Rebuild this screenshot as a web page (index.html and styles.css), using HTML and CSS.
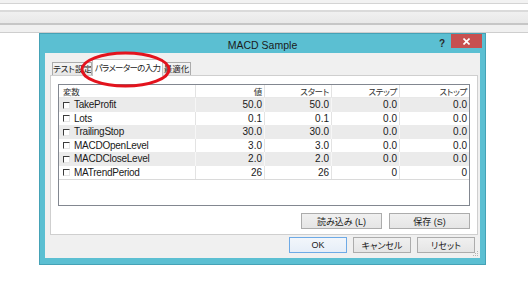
FILE: index.html
```html
<!DOCTYPE html>
<html lang="ja">
<head>
    <meta charset="UTF-8">
    <meta name="viewport" content="width=device-width, initial-scale=1.0">
    <title>MACD Sample</title>
    <link rel="stylesheet" href="styles.css">
</head>
<body>
    <!-- Barres de l'application derrière la fenêtre -->
    <div class="strips">
        <div class="strip strip-a"></div>
        <div class="strip strip-b"></div>
        <div class="strip strip-c"></div>
        <div class="strip strip-d"></div>
    </div>

    <div class="dialog">
        <div class="titlebar">
            <span></span>
            <span class="title">MACD Sample</span>
            <div class="controls">
                <span class="help">?</span>
                <span class="close">
                    <svg width="7" height="7" viewBox="0 0 7 7"><path d="M0.5 0.5L6.5 6.5M6.5 0.5L0.5 6.5" stroke="#fff" stroke-width="1.6"/></svg>
                </span>
            </div>
        </div>

        <div class="body">
            <div class="tabs">
                <div class="tab tab-test">テスト設定</div>
                <div class="tab tab-params active">パラメーターの入力</div>
                <div class="tab tab-optim">最適化</div>
                <svg class="mark" width="93" height="37" viewBox="0 0 93 37">
                    <ellipse cx="46.5" cy="18.5" rx="43.5" ry="16.5" fill="none" stroke="#e3131d" stroke-width="3"/>
                </svg>
            </div>

            <div class="panel">
                <div class="list">
                    <div class="row head">
                        <div class="cell name-head">変数</div>
                        <div class="cell num">値</div>
                        <div class="cell num">スタート</div>
                        <div class="cell num">ステップ</div>
                        <div class="cell num">ストップ</div>
                    </div>
                    <div class="row alt">
                        <div class="cell name"><span class="check"></span>TakeProfit</div>
                        <div class="cell num">50.0</div>
                        <div class="cell num">50.0</div>
                        <div class="cell num">0.0</div>
                        <div class="cell num">0.0</div>
                    </div>
                    <div class="row">
                        <div class="cell name"><span class="check"></span>Lots</div>
                        <div class="cell num">0.1</div>
                        <div class="cell num">0.1</div>
                        <div class="cell num">0.0</div>
                        <div class="cell num">0.0</div>
                    </div>
                    <div class="row alt">
                        <div class="cell name"><span class="check"></span>TrailingStop</div>
                        <div class="cell num">30.0</div>
                        <div class="cell num">30.0</div>
                        <div class="cell num">0.0</div>
                        <div class="cell num">0.0</div>
                    </div>
                    <div class="row">
                        <div class="cell name"><span class="check"></span>MACDOpenLevel</div>
                        <div class="cell num">3.0</div>
                        <div class="cell num">3.0</div>
                        <div class="cell num">0.0</div>
                        <div class="cell num">0.0</div>
                    </div>
                    <div class="row alt">
                        <div class="cell name"><span class="check"></span>MACDCloseLevel</div>
                        <div class="cell num">2.0</div>
                        <div class="cell num">2.0</div>
                        <div class="cell num">0.0</div>
                        <div class="cell num">0.0</div>
                    </div>
                    <div class="row last">
                        <div class="cell name"><span class="check"></span>MATrendPeriod</div>
                        <div class="cell num">26</div>
                        <div class="cell num">26</div>
                        <div class="cell num">0</div>
                        <div class="cell num">0</div>
                    </div>
                </div>

                <div class="actions">
                    <button class="btn btn-wide">読み込み (L)</button>
                    <button class="btn btn-wide">保存 (S)</button>
                </div>
            </div>

            <div class="footer">
                <button class="btn default">OK</button>
                <button class="btn">キャンセル</button>
                <button class="btn">リセット</button>
            </div>

            <svg class="grip" width="6" height="6" viewBox="0 0 6 6">
                <rect x="4" y="0" width="1" height="1" fill="#b5b5b5"/>
                <rect x="2" y="2" width="1" height="1" fill="#b5b5b5"/>
                <rect x="4" y="2" width="1" height="1" fill="#b5b5b5"/>
                <rect x="0" y="4" width="1" height="1" fill="#b5b5b5"/>
                <rect x="2" y="4" width="1" height="1" fill="#b5b5b5"/>
                <rect x="4" y="4" width="1" height="1" fill="#b5b5b5"/>
            </svg>
        </div>
    </div>
</body>
</html>
```

FILE: styles.css
```css
body {
    margin: 0;
    background-color: #fff;
    font-family: 'Liberation Sans', 'Noto Sans CJK JP', sans-serif;
    font-size: 10px;
    color: #1a1a1a;
}

/* Barres du haut */
.strip-a {
    height: 3px;
    background-color: #f2f2f2;
    border-bottom: 1px solid #d4d4d4;
}

.strip-b {
    height: 6px;
    background-color: #fff;
    border-bottom: 2px solid #dadada;
}

.strip-c {
    height: 11px;
    background: linear-gradient(#f0f0f0, #e8e8e8);
    border-bottom: 2px solid #c6c6c6;
}

.strip-d {
    height: 7px;
    background-color: #f0f0f0;
    border-bottom: 1px solid #cecece;
}

/* Fenêtre */
.dialog {
    width: 447px;
    margin-left: 39px;
    box-sizing: border-box;
    border: 1px solid #45a2b6;
    background-color: #5bbfd2;
    padding: 0 5px 6px 5px;
}

.titlebar {
    height: 19px;
    display: grid;
    grid-template-columns: 1fr auto 1fr;
}

.title {
    font-size: 10.5px;
    color: #1b1b1b;
    padding-top: 5px;
}

.controls {
    justify-self: end;
    display: flex;
    align-items: flex-start;
    margin-right: -2px;
}

.help {
    font-weight: bold;
    font-size: 10px;
    color: #2a2a2a;
    padding-top: 4px;
    margin-right: 6px;
}

.close {
    width: 31px;
    height: 14px;
    background-color: #c75050;
    display: flex;
    justify-content: center;
    align-items: center;
}

.body {
    position: relative;
    background-color: #f0f0f0;
    padding: 6px 2px 5px 5px;
}

/* Onglets */
.tabs {
    position: relative;
    display: flex;
    align-items: flex-end;
    height: 16px;
    margin-left: 2px;
}

.tab {
    box-sizing: border-box;
    height: 13px;
    border: 1px solid #acacac;
    border-bottom: none;
    background: linear-gradient(#f4f4f4, #e6e6e6);
    font-family: 'Noto Sans CJK JP', sans-serif;
    font-feature-settings: "palt";
    font-size: 8.5px;
    line-height: 11px;
    color: #222;
    text-align: center;
    white-space: nowrap;
    overflow: hidden;
}

.tab-test {
    width: 40px;
}

.tab-params {
    width: 71px;
    letter-spacing: -0.7px;
}

.tab-optim {
    width: 28px;
    border-left: none;
}

.tab.active {
    position: relative;
    z-index: 1;
    height: 17px;
    margin-bottom: -1px;
    background: #fff;
    border-color: #c4c4c4;
    line-height: 14px;
}

.mark {
    position: absolute;
    left: 27px;
    top: -8px;
    z-index: 2;
}

/* Panneau */
.panel {
    border: 1px solid #cfcfcf;
    background-color: #fff;
    padding: 8px 7px 5px 7px;
}

.list {
    box-sizing: border-box;
    height: 122px;
    border: 1px solid #828790;
    background-color: #fff;
}

.row {
    display: grid;
    grid-template-columns: 137px 69px 67px 68px 69px;
    height: 13px;
}

.row.alt {
    height: 14px;
    background-color: #ebebeb;
}

.row.head {
    box-sizing: border-box;
    height: 13px;
    border-bottom: 1px solid #e8e8e8;
}

.row.last {
    border-bottom: 1px solid #dadada;
}

.cell {
    border-right: 1px solid #e3e3e3;
    line-height: 13px;
    white-space: nowrap;
    overflow: hidden;
}

.row.alt .cell {
    border-right-color: #f6f6f6;
    line-height: 14px;
}

.row .cell:last-child {
    border-right: none;
}

.head .cell {
    font-family: 'Noto Sans CJK JP', sans-serif;
    font-feature-settings: "palt";
    font-size: 8.5px;
    line-height: 12px;
    color: #333;
    letter-spacing: -0.3px;
}

.name-head {
    padding-left: 4px;
}

.num {
    text-align: right;
    padding-right: 2px;
}

.name {
    display: flex;
    align-items: center;
    padding-left: 4px;
    letter-spacing: -0.25px;
}

.check {
    box-sizing: border-box;
    flex: none;
    width: 7px;
    height: 7px;
    margin-right: 4px;
    border-top: 1px solid #3c3c3c;
    border-left: 1px solid #3c3c3c;
    border-right: 1px solid #e6e6e6;
    border-bottom: 1px solid #e6e6e6;
    background-color: #fff;
}

/* Boutons */
.actions {
    display: flex;
    justify-content: flex-end;
    gap: 7px;
    margin-top: 7px;
}

.footer {
    display: flex;
    justify-content: flex-end;
    gap: 6px;
    margin: 2px 3px 0 0;
}

.btn {
    box-sizing: border-box;
    width: 58px;
    height: 16px;
    padding: 0;
    border: 1px solid #acacac;
    background: linear-gradient(#f0f0f0, #e5e5e5);
    font-family: 'Liberation Sans', 'Noto Sans CJK JP', sans-serif;
    font-feature-settings: "palt";
    font-size: 9px;
    color: #1a1a1a;
}

.btn-wide {
    width: 81px;
}

.btn.default {
    border-color: #6eaae6;
    background: linear-gradient(#f2f6fb, #e6eef8);
}

.grip {
    position: absolute;
    right: 1px;
    bottom: 1px;
}
```
